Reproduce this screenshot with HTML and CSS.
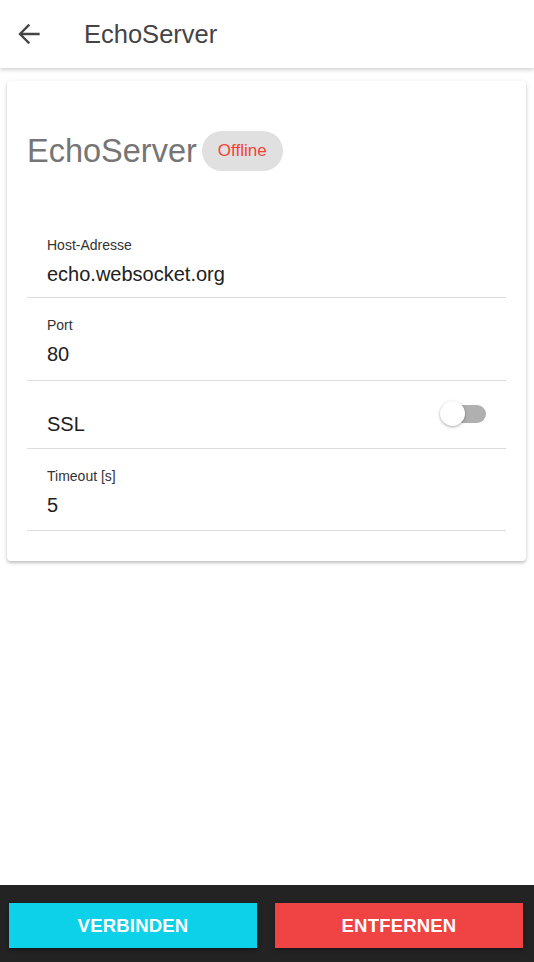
FILE: index.html
```html
<!DOCTYPE html>
<html lang="de">
<head>
<meta charset="utf-8">
<title>EchoServer</title>
<link rel="stylesheet" href="styles.css">
</head>
<body>
<div class="page">
  <header class="appbar">
    <button class="back" aria-label="Zurück">
      <svg width="26" height="26" viewBox="0 0 26 26"><path d="M22.5 13H4.5M12.5 4.5L4 13L12.5 21.5" fill="none" stroke="#444" stroke-width="2.3" stroke-linecap="square"/></svg>
    </button>
    <h1 class="appbar-title">EchoServer</h1>
  </header>
  <main class="content">
    <section class="card">
      <div class="card-head">
        <h2 class="card-title">EchoServer</h2>
        <span class="chip">Offline</span>
      </div>
      <ul class="fields">
        <li class="field field-first">
          <div class="label">Host-Adresse</div>
          <div class="value">echo.websocket.org</div>
        </li>
        <li class="field field-port">
          <div class="label">Port</div>
          <div class="value">80</div>
        </li>
        <li class="field field-switch">
          <div class="value">SSL</div>
          <span class="switch"><span class="track"></span><span class="thumb"></span></span>
        </li>
        <li class="field">
          <div class="label">Timeout [s]</div>
          <div class="value">5</div>
        </li>
      </ul>
    </section>
  </main>
  <footer class="bottombar">
    <button class="btn btn-connect">VERBINDEN</button>
    <button class="btn btn-remove">ENTFERNEN</button>
  </footer>
</div>
</body>
</html>
```
FILE: styles.css
```css
* { box-sizing: border-box; }
html, body { margin: 0; padding: 0; background: #fff; }
body { font-family: "Liberation Sans", Arial, sans-serif; color: #212121; }
.page { width: 534px; height: 962px; display: flex; flex-direction: column; }

.appbar {
  height: 68px; flex: none; display: flex; align-items: center;
  background: #fff; box-shadow: 0 2px 4px rgba(0,0,0,0.18);
  position: relative; z-index: 1;
}
.back { border: 0; background: none; padding: 0; margin-left: 16px; width: 26px; height: 26px; display: flex; }
.appbar-title { margin: 0 0 0 42px; font-weight: 400; font-size: 25.5px; color: #444; }

.content { flex: 1; padding: 13px 8px 0 7px; }
.card {
  background: #fff; border-radius: 4px; height: 480px; padding: 0 20px;
  box-shadow: 0 2px 3px rgba(0,0,0,0.2), 0 1px 6px rgba(0,0,0,0.08);
}
.card-head { display: flex; align-items: center; height: 136px; padding-top: 4px; }
.card-title { margin: 0; font-weight: 400; font-size: 32.5px; color: #757575; }
.chip {
  margin-left: 5px; height: 40px; padding: 0 16px; border-radius: 20px;
  background: #e0e0e0; color: #f44336; font-size: 17px; display: inline-flex; align-items: center;
}

.fields { list-style: none; margin: 1px 0 0; padding: 0; }
.field { padding: 17px 20px 11px; border-bottom: 1px solid #dcdcdc; }
.field-first { padding-bottom: 9px; }
.field-port { padding-bottom: 12px; }
.label { font-size: 14px; line-height: 20px; color: #333; }
.value { font-size: 20px; line-height: 28px; margin-top: 5px; color: #212121; }
.field-switch { display: flex; justify-content: space-between; align-items: flex-start; padding-top: 21px; padding-bottom: 10px; }
.field-switch .value { margin: 8px 0 0; }
.switch { position: relative; width: 46px; height: 26px; margin-top: -1px; }
.track { position: absolute; left: 4px; right: 0; top: 4px; height: 18px; border-radius: 9px; background: #b0b0b0; }
.thumb { position: absolute; left: 0; top: 0; width: 25px; height: 25px; border-radius: 50%; background: #fff; box-shadow: 0 1px 3px rgba(0,0,0,0.35); }

.bottombar {
  flex: none; height: 77px; background: #232323; display: flex; gap: 18px;
  padding: 18px 11px 14px 9px;
}
.btn {
  flex: 1; border: 0; color: #fff; font-family: "Liberation Sans", Arial, sans-serif;
  font-size: 18.5px; font-weight: 700; letter-spacing: 0.2px; box-shadow: 0 2px 4px rgba(0,0,0,0.35);
}
.btn-connect { background: #0dd1e8; }
.btn-remove { background: #f04343; }
```
